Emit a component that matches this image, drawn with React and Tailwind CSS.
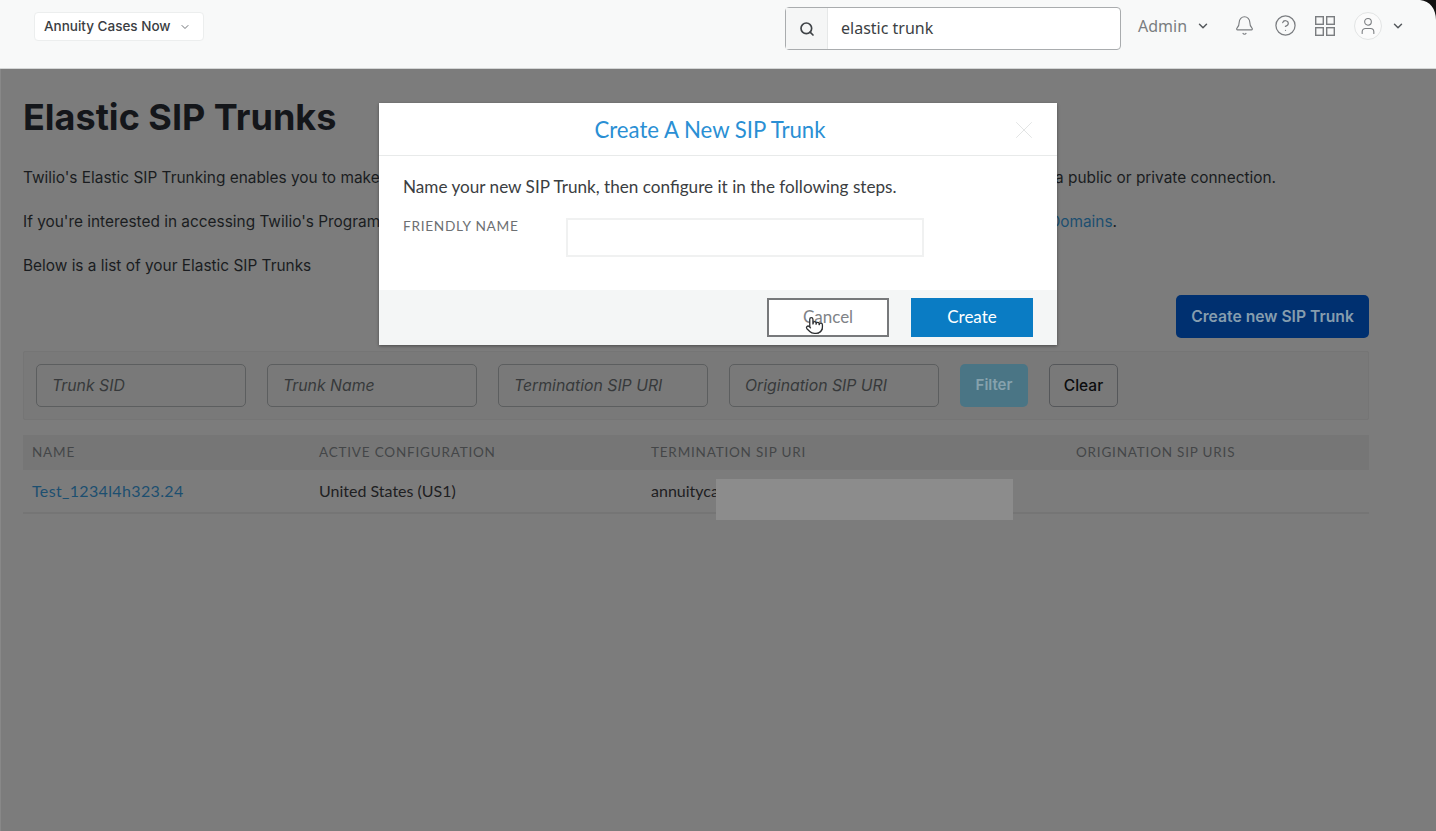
import React from 'react';
import { Search, ChevronDown, Bell, CircleHelp, User, X, Pointer } from 'lucide-react';

const filters = ['Trunk SID', 'Trunk Name', 'Termination SIP URI', 'Origination SIP URI'];

function GridIcon() {
  return (
    <svg width="22" height="22" viewBox="0 0 22 22" fill="none" stroke="#7a7d80" strokeWidth="1.4">
      <rect x="1.7" y="1.7" width="7.6" height="7.6" />
      <rect x="12.7" y="1.7" width="7.6" height="7.6" />
      <rect x="1.7" y="12.7" width="7.6" height="7.6" />
      <rect x="12.7" y="12.7" width="7.6" height="7.6" />
    </svg>
  );
}

function TopBar() {
  return (
    <header className="h-[69px] flex items-start bg-[#f8f9f9] border-b border-[#d4d6d6] font-['Inter',sans-serif]">
      <div className="ml-[34px] mt-[12px] w-[170px] h-[29px] flex items-center pl-[9px] bg-white border border-[#eceeee] rounded-[4px]">
        <span className="text-[13.5px] font-medium text-[#3a3d42] whitespace-nowrap">Annuity Cases Now</span>
        <ChevronDown size={12} className="ml-[8px] text-[#6f7377]" />
      </div>
      <div className="ml-[581px] mt-[7px] w-[336px] h-[43px] flex bg-white border border-[#a9acae] rounded-[4px]">
        <div className="w-[42px] flex items-center justify-center bg-[#f5f6f6] border-r border-[#e6e8e8]">
          <Search size={16} strokeWidth={2.5} className="text-[#3f4347]" />
        </div>
        <span className="ml-[13px] mb-[2px] self-center text-[16px] text-[#3c3f44] font-['Noto_Sans',sans-serif]">elastic trunk</span>
      </div>
      <div className="ml-[17px] mt-[8px] flex items-center h-[35px] text-[#7a7d80]">
        <span className="text-[16px] font-['Noto_Sans',sans-serif]">Admin</span>
        <ChevronDown size={14} strokeWidth={2.5} className="ml-[9px] text-[#54585c]" />
        <Bell size={21} strokeWidth={1.3} className="ml-[24px]" />
        <CircleHelp size={23} strokeWidth={1.3} className="ml-[19px]" />
        <span className="ml-[17px]"><GridIcon /></span>
        <span className="ml-[18px] w-[28px] h-[28px] flex items-center justify-center rounded-full bg-[#fbfbfb] border border-[#e2e4e4]">
          <User size={20} strokeWidth={1.3} />
        </span>
        <ChevronDown size={14} strokeWidth={2.5} className="ml-[9px] text-[#54585c]" />
      </div>
    </header>
  );
}

function FilterBar() {
  return (
    <div className="mt-[13px] h-[69px] w-[1346px] flex items-center gap-[21px] pl-[12px] bg-[#797979] border border-[#757575] rounded-[2px]">
      {filters.map((f) => (
        <div
          key={f}
          className="w-[210px] h-[43px] flex items-center pl-[15px] border border-[#5c5e5f] rounded-[5px] text-[15.8px] italic text-[#37393b]"
        >
          {f}
        </div>
      ))}
      <div className="w-[68px] h-[43px] flex items-center justify-center bg-[#4a7585] rounded-[5px] text-[15px] font-semibold text-[#86a2ad]">
        Filter
      </div>
      <div className="w-[69px] h-[43px] flex items-center justify-center border border-[#55575a] rounded-[5px] text-[15.5px] font-medium text-[#0b0c0e]">
        Clear
      </div>
    </div>
  );
}

function TrunkTable() {
  return (
    <div className="mt-[15px] w-[1346px] font-['Lato',sans-serif]">
      <div className="h-[35px] flex items-center bg-[#767676] text-[13.5px] tracking-[0.8px] text-[#444648]">
        <span className="ml-[9px] w-[287px]">NAME</span>
        <span className="w-[332px]">ACTIVE CONFIGURATION</span>
        <span className="w-[425px]">TERMINATION SIP URI</span>
        <span>ORIGINATION SIP URIS</span>
      </div>
      <div className="h-[44px] flex items-center border-b-2 border-[#757575] text-[16px] text-[#1e2022]">
        <span className="ml-[9px] w-[287px] tracking-[0.35px] text-[#1c4f70]">Test_1234l4h323.24</span>
        <span className="w-[332px]">United States (US1)</span>
        <span>annuityca</span>
      </div>
    </div>
  );
}

function Modal() {
  return (
    <div className="absolute left-[379px] top-[103px] w-[678px] h-[242px] flex flex-col bg-white shadow-[0_1px_3px_rgba(0,0,0,0.4)] font-['Lato',sans-serif]">
      <div className="relative h-[53px] shrink-0 flex items-center justify-center pt-[2px] border-b border-[#e8eaea]">
        <h2 className="mr-[16px] text-[22.2px] text-[#2a8fd4]">Create A New SIP Trunk</h2>
        <X size={30} strokeWidth={0.8} className="absolute right-[18px] top-[12px] text-[#e3e5e5]" />
      </div>
      <div className="flex-1 pl-[24px] pt-[21px]">
        <p className="text-[17.15px] leading-[20px] text-[#3b3e42]">
          Name your new SIP Trunk, then configure it in the following steps.
        </p>
        <div className="mt-[21px] flex items-start">
          <label className="-mt-[2px] w-[163px] text-[13.7px] tracking-[0.7px] text-[#6d7073]">FRIENDLY NAME</label>
          <div className="w-[358px] h-[39px] border-2 border-[#f0f1f1]" />
        </div>
      </div>
      <div className="h-[55px] shrink-0 flex items-start justify-end gap-[22px] pt-[8px] pr-[24px] bg-[#f4f6f6]">
        <div className="relative w-[122px] h-[39px] flex items-center justify-center pb-[2px] bg-white border-2 border-[#77797b] text-[17px] text-[#808386]">
          Cancel
          <Pointer size={19} strokeWidth={1.6} fill="white" className="absolute left-[36px] top-[16px] text-[#2c2e30]" />
        </div>
        <div className="w-[122px] h-[39px] flex items-center justify-center pb-[2px] bg-[#0a7cc4] text-[17px] text-white">
          Create
        </div>
      </div>
    </div>
  );
}

export default function App() {
  return (
    <div className="relative h-[831px] w-[1436px] overflow-hidden bg-[#7c7c7c] font-['Inter',sans-serif]">
      <TopBar />
      <main className="pl-[22px] pt-[26px] h-[762px] border-l border-[#888888]">
        <h1 className="text-[36px] leading-[44px] font-bold text-[#14161a]">Elastic SIP Trunks</h1>
        <div className="mt-[29px] w-[1253px] flex justify-between text-[15.4px] leading-[20px] text-[#1a1c1f] whitespace-nowrap">
          <span>Twilio's Elastic SIP Trunking enables you to make</span>
          <span>a public or private connection.</span>
        </div>
        <div className="mt-[24px] w-[1094px] flex justify-between text-[15.4px] leading-[20px] text-[#1a1c1f] whitespace-nowrap">
          <span>If you're interested in accessing Twilio's Program</span>
          <span className="text-[#1c4f70]">Domains<span className="text-[#1a1c1f]">.</span></span>
        </div>
        <p className="mt-[24px] text-[15.4px] leading-[20px] text-[#1a1c1f]">Below is a list of your Elastic SIP Trunks</p>
        <div className="w-[1346px] flex justify-end">
          <div className="mt-[19px] w-[193px] h-[43px] flex items-center justify-center bg-[#003070] rounded-[5px] text-[15.7px] font-semibold text-[#869dae]">
            Create new SIP Trunk
          </div>
        </div>
        <FilterBar />
        <TrunkTable />
      </main>
      {/* redacted part of the uri */}
      <div className="absolute left-[716px] top-[479px] w-[297px] h-[41px] bg-[#8c8c8c]" />
      <Modal />
      {/* rounded window corner */}
      <div className="absolute right-0 top-0 w-[16px] h-[20px] bg-[#f8f9f9]">
        <div className="absolute inset-0 bg-[#111] [clip-path:path('M0_0H16V20C16_9_10_1_0_0Z')]" />
      </div>
    </div>
  );
}
